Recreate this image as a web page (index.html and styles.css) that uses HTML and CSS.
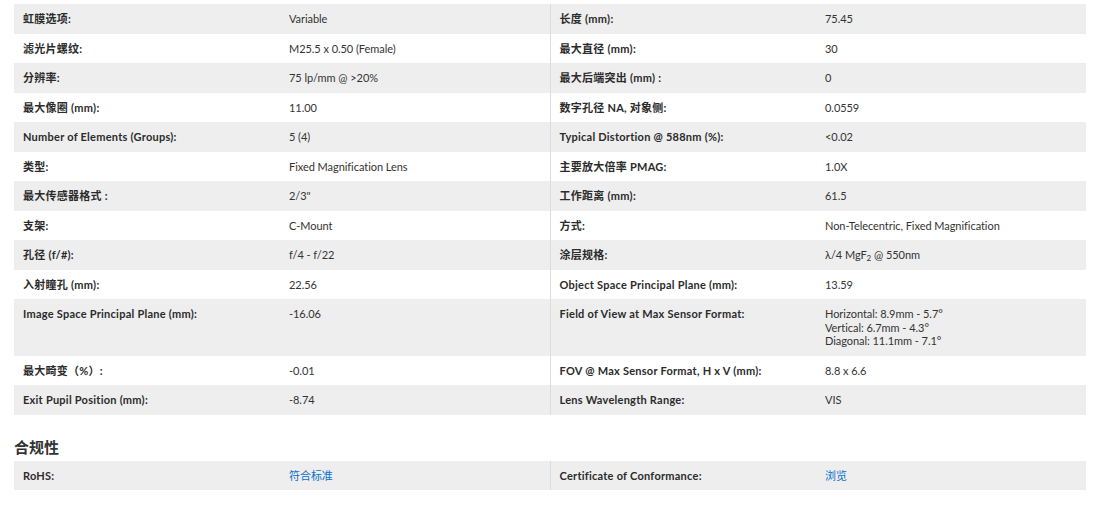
FILE: index.html
```html
<!DOCTYPE html>
<html lang="zh">
<head>
<meta charset="utf-8">
<title>Specs</title>
<link rel="stylesheet" href="styles.css">
</head>
<body>
<div class="page">
  <table class="specs">
    <colgroup><col class="c1"><col class="c2"><col class="c3"><col class="c4"></colgroup>
    <tbody>
      <tr><th>虹膜选项:</th><td>Variable</td><th class="rl">长度 (mm):</th><td>75.45</td></tr>
      <tr><th>滤光片螺纹:</th><td>M25.5 x 0.50 (Female)</td><th class="rl">最大直径 (mm):</th><td>30</td></tr>
      <tr><th>分辨率:</th><td>75 lp/mm @ &gt;20%</td><th class="rl">最大后端突出 (mm) :</th><td>0</td></tr>
      <tr><th>最大像圈 (mm):</th><td>11.00</td><th class="rl">数字孔径 NA, 对象侧:</th><td>0.0559</td></tr>
      <tr><th>Number of Elements (Groups):</th><td>5 (4)</td><th class="rl">Typical Distortion @ 588nm (%):</th><td>&lt;0.02</td></tr>
      <tr><th>类型:</th><td>Fixed Magnification Lens</td><th class="rl">主要放大倍率 PMAG:</th><td>1.0X</td></tr>
      <tr><th>最大传感器格式 :</th><td>2/3"</td><th class="rl">工作距离 (mm):</th><td>61.5</td></tr>
      <tr><th>支架:</th><td>C-Mount</td><th class="rl">方式:</th><td>Non-Telecentric, Fixed Magnification</td></tr>
      <tr><th>孔径 (f/#):</th><td>f/4 - f/22</td><th class="rl">涂层规格:</th><td>λ/4 MgF<sub>2</sub> @ 550nm</td></tr>
      <tr><th>入射瞳孔 (mm):</th><td>22.56</td><th class="rl">Object Space Principal Plane (mm):</th><td>13.59</td></tr>
      <tr><th>Image Space Principal Plane (mm):</th><td>-16.06</td><th class="rl">Field of View at Max Sensor Format:</th><td>Horizontal: 8.9mm - 5.7°<br>Vertical: 6.7mm - 4.3°<br>Diagonal: 11.1mm - 7.1°</td></tr>
      <tr><th>最大畸变（%）:</th><td>-0.01</td><th class="rl">FOV @ Max Sensor Format, H x V (mm):</th><td>8.8 x 6.6</td></tr>
      <tr><th>Exit Pupil Position (mm):</th><td>-8.74</td><th class="rl">Lens Wavelength Range:</th><td>VIS</td></tr>
    </tbody>
  </table>
  <h2 class="section-title">合规性</h2>
  <table class="specs">
    <colgroup><col class="c1"><col class="c2"><col class="c3"><col class="c4"></colgroup>
    <tbody>
      <tr><th>RoHS:</th><td><a class="link" href="#">符合标准</a></td><th class="rl">Certificate of Conformance:</th><td><a class="link" href="#">浏览</a></td></tr>
    </tbody>
  </table>
</div>
</body>
</html>
```

FILE: styles.css
```css
html, body {
  margin: 0;
  padding: 0;
  background: #ffffff;
}

.page {
  padding: 4px 8px 0 14px;
  font-family: "Lato", "Noto Sans CJK SC", sans-serif;
  color: #333333;
}

.specs {
  width: 1072px;
  border-collapse: collapse;
  table-layout: fixed;
  font-size: 11px;
  line-height: 13.5px;
}

.c1 { width: 266px; }
.c2 { width: 270px; }
.c3 { width: 266px; }
.c4 { width: 270px; }

.specs th,
.specs td {
  padding: 8px 9px;
  text-align: left;
  vertical-align: top;
}

.specs th {
  font-weight: 700;
  letter-spacing: 0.25px;
  color: #2b2b2b;
}

.specs td {
  font-weight: 400;
  letter-spacing: -0.05px;
}

.specs tr:nth-child(odd) {
  background: #eeeeee;
}

.specs .rl {
  border-left: 1px solid #dcdcdc;
}

.specs sub {
  font-size: 8px;
  line-height: 0;
  vertical-align: -2px;
}

.section-title {
  margin: 22px 0 4px 0;
  font-family: "Noto Sans CJK SC", sans-serif;
  font-size: 15px;
  line-height: 20px;
  font-weight: 700;
  color: #333333;
}

.link {
  color: #0a6ecf;
  text-decoration: none;
}
```
